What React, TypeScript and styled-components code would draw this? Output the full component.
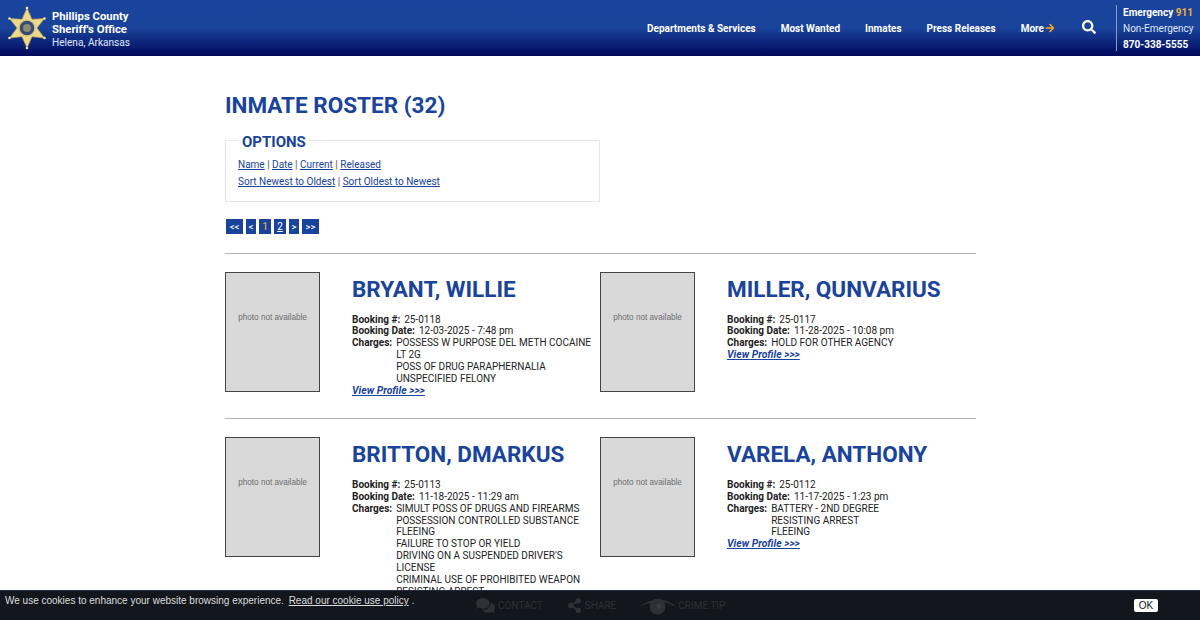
import React from "react";
import styled, { createGlobalStyle } from "styled-components";
import { FaSearch, FaArrowRight, FaComments, FaShareAlt } from "react-icons/fa";

const GlobalStyle = createGlobalStyle`
  html, body {
    margin: 0;
    padding: 0;
    height: 620px;
    overflow: hidden;
    background: #fff;
    font-family: Roboto, "Liberation Sans", sans-serif;
  }
`;

const Header = styled.header`
  height: 56px;
  display: flex;
  align-items: center;
  justify-content: space-between;
  background: linear-gradient(to bottom, #1a439d 0%, #1a439b 50%, #00095c 100%);
  color: #fff;
`;
const Brand = styled.div`
  display: flex;
  align-items: center;
  padding-left: 6px;
  gap: 4px;
`;
const BrandText = styled.div`
  font-size: 11.3px;
  line-height: 13px;
  padding-top: 2px;
  b {
    display: block;
    font-weight: 700;
  }
  span {
    font-size: 10.1px;
    color: #dfe6f7;
  }
`;
const Nav = styled.nav`
  display: flex;
  align-items: center;
`;
const NavLink = styled.a`
  font-size: 10px;
  font-weight: 700;
  color: #fff;
  margin-right: 25px;
  display: flex;
  align-items: center;
  gap: 1px;
  svg {
    color: #f3a81c;
  }
`;
const SearchBtn = styled.span`
  display: flex;
  margin: -2px 20px 0 2px;
`;
const Phones = styled.div`
  border-left: 1px solid #8e9cc4;
  box-sizing: border-box;
  height: 46px;
  width: 84px;
  padding: 2px 0 0 6px;
  font-size: 10px;
  line-height: 16px;
  white-space: nowrap;
  display: flex;
  flex-direction: column;
  justify-content: center;
  b {
    font-weight: 700;
  }
  em {
    font-style: normal;
    font-weight: 700;
    color: #e8b23c;
  }
  span {
    color: #dfe6f7;
  }
`;

const Main = styled.main`
  width: 751px;
  margin-left: 225px;
`;
const Title = styled.h1`
  margin: 0;
  padding-top: 35px;
  font-size: 22.5px;
  line-height: 28px;
  font-weight: 700;
  color: #1a439b;
`;
const Options = styled.fieldset`
  margin: 11px 0 0;
  padding: 6px 12px 12px;
  width: 375px;
  height: 72px;
  box-sizing: border-box;
  border: 1px solid #e6e6e6;
  font-size: 10px;
  line-height: 17px;
  color: #555;
  legend {
    margin-left: 1px;
    padding: 4px 3px 0;
    font-size: 15px;
    line-height: 16px;
    font-weight: 700;
    color: #1a439b;
  }
`;
const OptionRow = styled.div`
  a {
    color: #1a439b;
    text-decoration: underline;
  }
`;
const Pager = styled.div`
  display: flex;
  gap: 3px;
  margin-top: 17px;
  padding-left: 1px;
`;
const PageBtn = styled.span<{ $current?: boolean; $plain?: boolean; $w: number }>`
  height: 15px;
  width: ${(p) => p.$w}px;
  display: flex;
  align-items: center;
  justify-content: center;
  background: #1a439b;
  font-size: ${(p) => (p.$plain ? 10 : 9.5)}px;
  font-weight: ${(p) => (p.$current ? 500 : p.$plain ? 400 : 500)};
  color: ${(p) => (p.$current ? "#d9a941" : "#fff")};
  text-decoration: ${(p) => (p.$plain && !p.$current ? "underline" : "none")};
`;
const Row = styled.section<{ $first?: boolean }>`
  display: grid;
  grid-template-columns: 375px 376px;
  border-top: 1px solid #b4b4b4;
  margin-top: ${(p) => (p.$first ? 19 : 0)}px;
  padding: 18px 0 0;
  height: 146.3px;
`;
const Card = styled.article`
  display: flex;
`;
const Photo = styled.div`
  flex: none;
  width: 95px;
  height: 120px;
  box-sizing: border-box;
  border: 1px solid #444;
  background: #d9d9d9;
  color: #6e6e6e;
  font-family: "Liberation Sans", Arial, sans-serif;
  font-size: 8.2px;
  text-align: center;
  line-height: 89px;
`;
const Info = styled.div`
  margin-left: 32px;
  width: 245px;
  font-size: 10px;
  line-height: 11.9px;
  color: #222;
`;
const Name = styled.h2`
  margin: 1px 0 8.55px;
  font-size: 22.5px;
  line-height: 32px;
  font-weight: 700;
  color: #1a439b;
  white-space: nowrap;
`;
const Field = styled.div`
  display: flex;
  gap: 4px;
  b {
    font-weight: 700;
    white-space: nowrap;
  }
`;
const ChargeList = styled.div`
  flex: 1;
`;
const ProfileLink = styled.a`
  display: block;
  font-weight: 700;
  font-style: italic;
  font-size: 10.4px;
  color: #1a439b;
  text-decoration: underline;
`;
const CookieBar = styled.footer`
  position: fixed;
  left: 0;
  right: 0;
  bottom: 0;
  height: 30px;
  background: #14161d;
  border-top: 1px solid #2a2c40;
  box-sizing: border-box;
  color: #ddd;
  font-family: "Liberation Sans", Arial, sans-serif;
  font-size: 10px;
`;
const CookieText = styled.div`
  position: absolute;
  left: 5px;
  top: 3px;
  line-height: 14px;
  a {
    margin-left: 2px;
    color: #ddd;
    text-decoration: underline;
  }
`;
const Shortcuts = styled.div`
  position: absolute;
  left: 476px;
  top: 5px;
  display: flex;
  align-items: center;
  font-family: Roboto, sans-serif;
  font-size: 10px;
  color: #2e3035;
`;
const Shortcut = styled.span<{ $gap: number }>`
  display: flex;
  align-items: center;
  gap: 3px;
  margin-right: ${(p) => p.$gap}px;
`;
const OkButton = styled.button`
  position: absolute;
  right: 42px;
  top: 8px;
  width: 24px;
  height: 13px;
  padding: 0;
  border: 0;
  border-radius: 2px;
  background: #fff;
  color: #111;
  font-family: "Liberation Sans", Arial, sans-serif;
  font-size: 10px;
  line-height: 13px;
`;

const Star = () => (
  <svg width="42" height="44" viewBox="0 0 42 44">
    <path
      d="M21 2 L26 13.3 L38.5 12.5 L31 22 L38.5 32 L26 30.7 L21 42 L16 30.7 L3.5 32 L11 22 L3.5 12.5 L16 13.3 Z"
      fill="#ecd98a"
      stroke="#b59a4a"
      strokeWidth="0.7"
    />
    <circle cx="21" cy="2" r="1.3" fill="#f3e6a8" />
    <circle cx="38.5" cy="12.5" r="1.3" fill="#f3e6a8" />
    <circle cx="38.5" cy="32" r="1.3" fill="#f3e6a8" />
    <circle cx="21" cy="42" r="1.3" fill="#f3e6a8" />
    <circle cx="3.5" cy="32" r="1.3" fill="#f3e6a8" />
    <circle cx="3.5" cy="12.5" r="1.3" fill="#f3e6a8" />
    <circle cx="21" cy="22" r="8" fill="#3a4a78" stroke="#d8c987" strokeWidth="1.5" />
    <circle cx="21" cy="22" r="4" fill="#8b8a72" />
  </svg>
);

const Eye = () => (
  <svg width="35" height="18" viewBox="0 0 35 18" fill="#2e3035">
    <path d="M0 10 C8 1 26 0 35 9 L33 9 C26 3.5 10 3.5 0 10 Z" />
    <circle cx="17.5" cy="9.5" r="8" />
    <circle cx="19" cy="9" r="2.5" fill="#3a3c42" />
  </svg>
);

const inmates = [
  [
    {
      name: "BRYANT, WILLIE",
      id: "25-0118",
      date: "12-03-2025 - 7:48 pm",
      charges: ["POSSESS W PURPOSE DEL METH COCAINE LT 2G", "POSS OF DRUG PARAPHERNALIA", "UNSPECIFIED FELONY"],
    },
    {
      name: "MILLER, QUNVARIUS",
      id: "25-0117",
      date: "11-28-2025 - 10:08 pm",
      charges: ["HOLD FOR OTHER AGENCY"],
    },
  ],
  [
    {
      name: "BRITTON, DMARKUS",
      id: "25-0113",
      date: "11-18-2025 - 11:29 am",
      charges: [
        "SIMULT POSS OF DRUGS AND FIREARMS",
        "POSSESSION CONTROLLED SUBSTANCE",
        "FLEEING",
        "FAILURE TO STOP OR YIELD",
        "DRIVING ON A SUSPENDED DRIVER'S LICENSE",
        "CRIMINAL USE OF PROHIBITED WEAPON",
        "RESISTING ARREST",
      ],
    },
    {
      name: "VARELA, ANTHONY",
      id: "25-0112",
      date: "11-17-2025 - 1:23 pm",
      charges: ["BATTERY - 2ND DEGREE", "RESISTING ARREST", "FLEEING"],
    },
  ],
];

export default function App() {
  return (
    <>
      <GlobalStyle />
      <Header>
        <Brand>
          <Star />
          <BrandText>
            <b>Phillips County</b>
            <b>Sheriff's Office</b>
            <span>Helena, Arkansas</span>
          </BrandText>
        </Brand>
        <Nav>
          <NavLink>Departments &amp; Services</NavLink>
          <NavLink>Most Wanted</NavLink>
          <NavLink>Inmates</NavLink>
          <NavLink>Press Releases</NavLink>
          <NavLink>
            More <FaArrowRight size={10} />
          </NavLink>
          <SearchBtn>
            <FaSearch size={14} />
          </SearchBtn>
          <Phones>
            <b>
              Emergency <em>911</em>
            </b>
            <span>Non-Emergency</span>
            <b>870-338-5555</b>
          </Phones>
        </Nav>
      </Header>
      <Main>
        <Title>INMATE ROSTER (32)</Title>
        <Options>
          <legend>OPTIONS</legend>
          <OptionRow>
            <a>Name</a> | <a>Date</a> | <a>Current</a> | <a>Released</a>
          </OptionRow>
          <OptionRow>
            <a>Sort Newest to Oldest</a> | <a>Sort Oldest to Newest</a>
          </OptionRow>
        </Options>
        <Pager>
          <PageBtn $w={17}>&lt;&lt;</PageBtn>
          <PageBtn $w={10}>&lt;</PageBtn>
          <PageBtn $w={12} $plain $current>
            1
          </PageBtn>
          <PageBtn $w={12} $plain>
            2
          </PageBtn>
          <PageBtn $w={10}>&gt;</PageBtn>
          <PageBtn $w={17}>&gt;&gt;</PageBtn>
        </Pager>
        {inmates.map((row, i) => (
          <Row key={i} $first={i === 0}>
            {row.map((p) => (
              <Card key={p.id}>
                <Photo>photo not available</Photo>
                <Info>
                  <Name>{p.name}</Name>
                  <Field>
                    <b>Booking #:</b> {p.id}
                  </Field>
                  <Field>
                    <b>Booking Date:</b> {p.date}
                  </Field>
                  <Field>
                    <b>Charges:</b>
                    <ChargeList>
                      {p.charges.map((c) => (
                        <div key={c}>{c}</div>
                      ))}
                    </ChargeList>
                  </Field>
                  <ProfileLink>View Profile &gt;&gt;&gt;</ProfileLink>
                </Info>
              </Card>
            ))}
          </Row>
        ))}
      </Main>
      <CookieBar>
        <Shortcuts>
          <Shortcut $gap={24}>
            <FaComments size={19} /> CONTACT
          </Shortcut>
          <Shortcut $gap={24}>
            <FaShareAlt size={15} /> SHARE
          </Shortcut>
          <Shortcut $gap={0}>
            <Eye /> CRIME TIP
          </Shortcut>
        </Shortcuts>
        <CookieText>
          We use cookies to enhance your website browsing experience. <a>Read our cookie use policy</a> .
        </CookieText>
        <OkButton>OK</OkButton>
      </CookieBar>
    </>
  );
}
